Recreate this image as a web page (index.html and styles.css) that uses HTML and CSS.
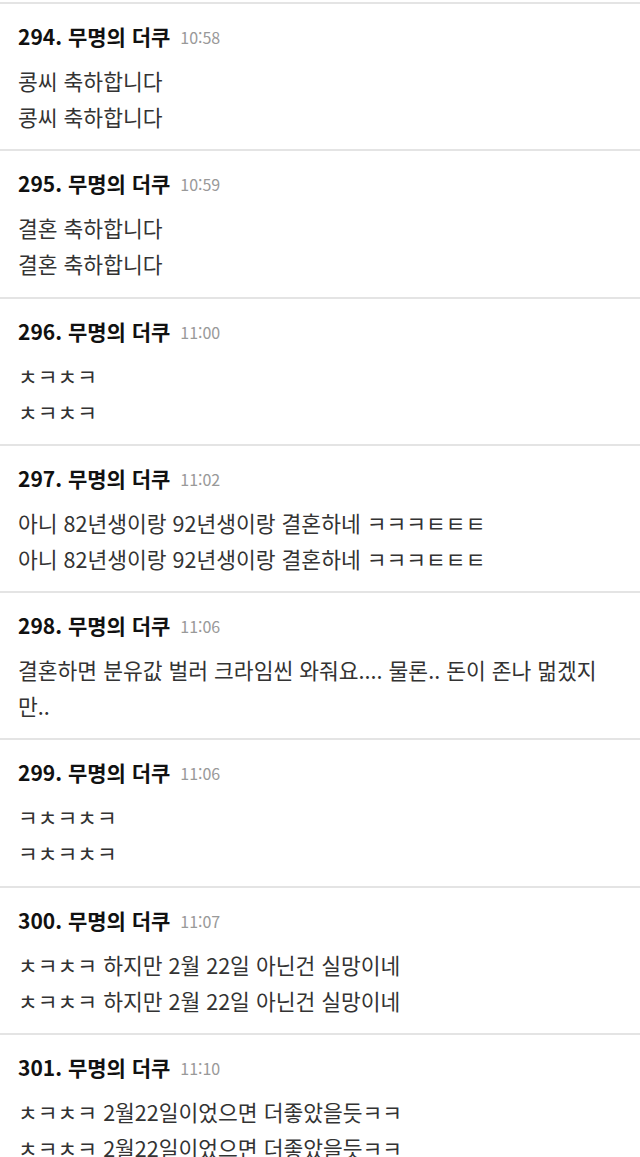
FILE: index.html
```html
<!DOCTYPE html>
<html lang="ko">
  <head>
    <meta charset="UTF-8" />
    <meta name="viewport" content="width=device-width, initial-scale=1.0" />
    <title>댓글</title>
    <link rel="stylesheet" href="styles.css">
  </head>
  <body>
    <ul class="comment-list">
      <li class="comment">
        <div class="comment-head">294. 무명의 더쿠 <span class="comment-time">10:58</span></div>
        <p>콩씨 축하합니다</p>
        <p>콩씨 축하합니다</p>
      </li>
      <li class="comment">
        <div class="comment-head">295. 무명의 더쿠 <span class="comment-time">10:59</span></div>
        <p>결혼 축하합니다</p>
        <p>결혼 축하합니다</p>
      </li>
      <li class="comment">
        <div class="comment-head">296. 무명의 더쿠 <span class="comment-time">11:00</span></div>
        <p>ㅊㅋㅊㅋ</p>
        <p>ㅊㅋㅊㅋ</p>
      </li>
      <li class="comment">
        <div class="comment-head">297. 무명의 더쿠 <span class="comment-time">11:02</span></div>
        <p>아니 82년생이랑 92년생이랑 결혼하네 ㅋㅋㅋㅌㅌㅌ</p>
        <p>아니 82년생이랑 92년생이랑 결혼하네 ㅋㅋㅋㅌㅌㅌ</p>
      </li>
      <li class="comment">
        <div class="comment-head">298. 무명의 더쿠 <span class="comment-time">11:06</span></div>
        <p>결혼하면 분유값 벌러 크라임씬 와줘요.... 물론.. 돈이 존나 멂겠지<br />만..</p>
      </li>
      <li class="comment">
        <div class="comment-head">299. 무명의 더쿠 <span class="comment-time">11:06</span></div>
        <p>ㅋㅊㅋㅊㅋ</p>
        <p>ㅋㅊㅋㅊㅋ</p>
      </li>
      <li class="comment">
        <div class="comment-head">300. 무명의 더쿠 <span class="comment-time">11:07</span></div>
        <p>ㅊㅋㅊㅋ 하지만 2월 22일 아닌건 실망이네</p>
        <p>ㅊㅋㅊㅋ 하지만 2월 22일 아닌건 실망이네</p>
      </li>
      <li class="comment">
        <div class="comment-head">301. 무명의 더쿠 <span class="comment-time">11:10</span></div>
        <p>ㅊㅋㅊㅋ 2월22일이었으면 더좋았을듯ㅋㅋ</p>
        <p>ㅊㅋㅊㅋ 2월22일이었으면 더좋았을듯ㅋㅋ</p>
      </li>
    </ul>
  </body>
</html>
```

FILE: styles.css
```css
body {
  font-family: "Noto Sans CJK KR", "Noto Sans", sans-serif;
  background-color: #fff;
  color: #333;
  margin: 0;
}

.comment-list {
  list-style: none;
  margin: 0;
  padding: 2px 0 0;
}

.comment {
  border-top: 2px solid #e4e4e4;
  padding: 18px 20px 14.3px 18px;
}

.comment-head {
  display: flex;
  align-items: center;
  height: 28px;
  font-size: 21px;
  font-weight: bold;
  line-height: 28px;
  color: #111;
  margin-bottom: 13px;
  white-space: pre;
}

.comment-time {
  font-size: 16px;
  font-weight: normal;
  line-height: 20px;
  color: #999;
  margin-left: 4px;
  padding-top: 2px;
}

.comment p {
  margin: 0;
  font-size: 21.5px;
  line-height: 36px;
}
```
